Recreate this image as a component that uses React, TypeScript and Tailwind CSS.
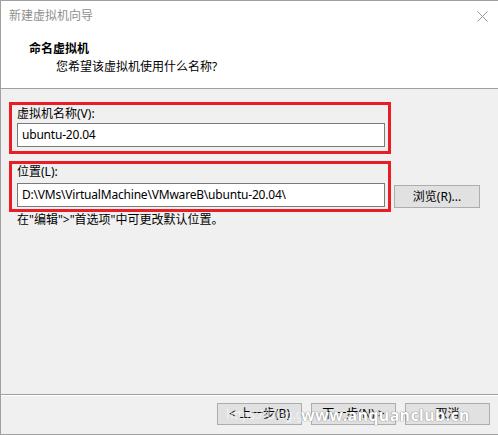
import React from 'react';

const uiFont = { fontFamily: '"Noto Sans", "Noto Sans CJK SC", sans-serif' };

function WizardButton({ children }: { children: React.ReactNode }) {
    return (
        <div className="w-[85px] h-[22px] flex items-center justify-center bg-[#e1e1e1] border border-[#adadad] text-[12px] text-black">
            {children}
        </div>
    );
}

export default function App() {
    return (
        <div
            className="relative w-[498px] h-[435px] bg-[#f0f0f0] border-l border-t border-b border-[#a0a0a0] flex flex-col text-[12px] leading-[16px] text-black overflow-hidden"
            style={uiFont}
        >
            {/* Header: title bar + step heading */}
            <div className="bg-white h-[88px] border-b border-[#a0a0a0] flex flex-col">
                <div className="h-[30px] pl-[8px] pr-[9px] flex items-center justify-between">
                    <span className="text-[#8f8f8f]">新建虚拟机向导</span>
                    <svg width="11" height="11" viewBox="0 0 11 11" className="mr-[1px]">
                        <path d="M0.5 0.5 L10.5 10.5 M10.5 0.5 L0.5 10.5" stroke="#9a9a9a" strokeWidth="1" />
                    </svg>
                </div>
                <div className="pl-[28px] mt-[10px] font-bold">命名虚拟机</div>
                <div className="pl-[55px] mt-[2px]">您希望该虚拟机使用什么名称?</div>
            </div>

            {/* Body */}
            <div className="flex-1 flex flex-col pl-[8px]">
                <div className="mt-[13px] w-[382px] h-[52px] border-[3px] border-[#ec1c24] pl-[5px] pt-[1px]">
                    <div>虚拟机名称(V):</div>
                    <div className="mt-[1px] w-[368px] h-[24px] bg-white border border-[#7a7a7a] flex items-center pl-[4px] tracking-[-0.2px]">
                        ubuntu-20.04
                    </div>
                </div>

                <div className="mt-[7px] flex">
                    <div className="w-[382px] h-[51px] border-[3px] border-[#ec1c24] pl-[5px]">
                        <div>位置(L):</div>
                        <div className="mt-[3px] w-[368px] h-[24px] bg-white border border-[#7a7a7a] flex items-center pl-[4px] tracking-[-0.2px]">
                            D:\VMs\VirtualMachine\VMwareB\ubuntu-20.04\
                        </div>
                    </div>
                    <div className="self-end mb-[4px] ml-[3px] w-[86px] h-[23px] flex items-center justify-center bg-[#e1e1e1] border border-[#adadad]">
                        浏览(R)...
                    </div>
                </div>

                <div className="pl-[8px]">在"编辑"&gt;"首选项"中可更改默认位置。</div>
            </div>

            {/* Footer buttons */}
            <div className="h-[40px] border-t border-[#a0a0a0]">
                <div className="h-full border-t border-white flex justify-end gap-[9px] pr-[8px] pt-[7px]">
                    <WizardButton>&lt; 上一步(B)</WizardButton>
                    <WizardButton>下一步(N) &gt;</WizardButton>
                    <WizardButton>取消</WizardButton>
                </div>
            </div>

            {/* Watermark across the footer */}
            <span className="absolute left-[225px] top-[406px] text-[12px] leading-[16px] text-white/60 pointer-events-none">
                https://blog.gu
            </span>
            <span
                className="absolute left-[300px] top-[403px] text-[16px] leading-[22px] font-bold text-white tracking-[0.4px] pointer-events-none"
                style={{ textShadow: '0 0 1px #777, 0 0 1px #777' }}
            >
                www.anquanclub.cn
            </span>
        </div>
    );
}
